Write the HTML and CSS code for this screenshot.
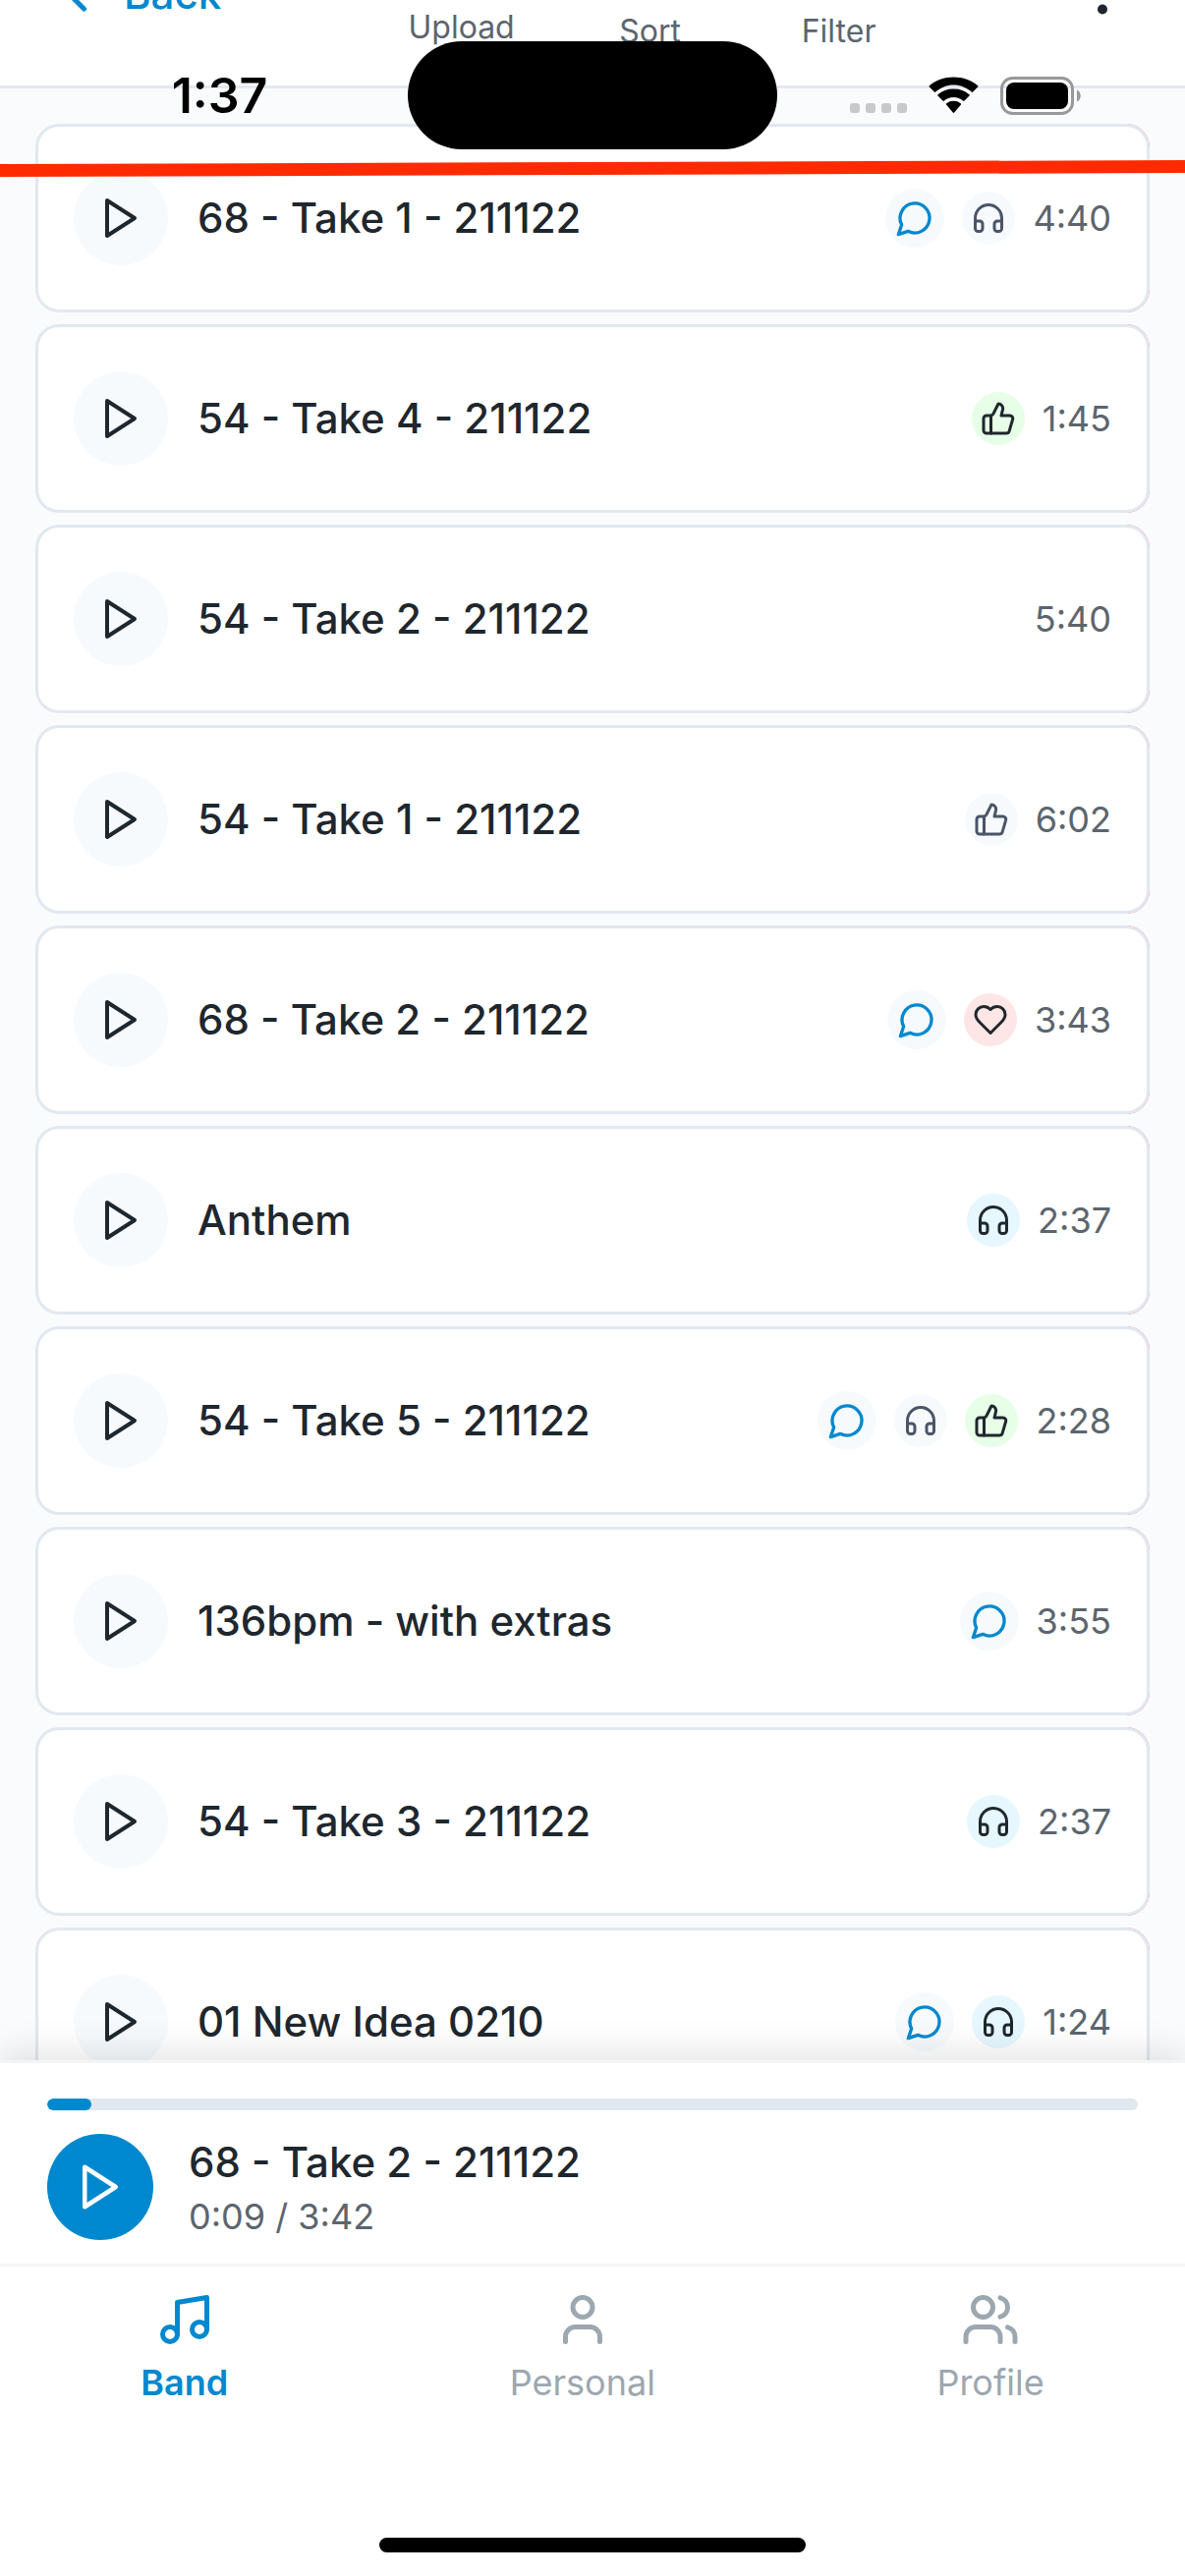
FILE: index.html
```html
<!DOCTYPE html>
<html lang="en">
<head>
<meta charset="utf-8">
<meta name="viewport" content="width=device-width, initial-scale=1">
<title>Band recordings</title>
<link rel="stylesheet" href="styles.css">
</head>
<body>
<svg class="sprite" aria-hidden="true">
  <symbol id="play" viewBox="0 0 24 24"><path d="M5 3l14 9-14 9V3z"/></symbol>
  <symbol id="comment" viewBox="0 0 24 24"><path d="M7.9 20A9 9 0 1 0 4 16.1L2 22Z"/></symbol>
  <symbol id="headphones" viewBox="0 0 24 24"><path d="M3 14h3a2 2 0 0 1 2 2v3a2 2 0 0 1-2 2H5a2 2 0 0 1-2-2v-7a9 9 0 0 1 18 0v7a2 2 0 0 1-2 2h-1a2 2 0 0 1-2-2v-3a2 2 0 0 1 2-2h3"/></symbol>
  <symbol id="thumb" viewBox="0 0 24 24"><path d="M7 10v12"/><path d="M15 5.88 14 10h5.83a2 2 0 0 1 1.92 2.56l-2.33 8A2 2 0 0 1 17.5 22H4a2 2 0 0 1-2-2v-8a2 2 0 0 1 2-2h2.76a2 2 0 0 0 1.79-1.11L12 2a3.13 3.13 0 0 1 3 3.88Z"/></symbol>
  <symbol id="heart" viewBox="0 0 24 24"><path d="M19 14c1.49-1.46 3-3.21 3-5.5A5.5 5.5 0 0 0 16.5 3c-1.76 0-3 .5-4.5 2-1.5-1.5-2.74-2-4.5-2A5.5 5.5 0 0 0 2 8.5c0 2.3 1.5 4.05 3 5.5l7 7Z"/></symbol>
</svg>

<div class="app">
  <header class="topbar">
    <a class="back" href="#"><svg class="icon icon-60" viewBox="0 0 24 24"><path d="M15 18l-6-6 6-6"/></svg>Back</a>
    <div class="tools">
      <button class="tool" type="button"><svg class="icon icon-60" viewBox="0 0 24 24"><path d="M21 15v4a2 2 0 0 1-2 2H5a2 2 0 0 1-2-2v-4M17 8l-5-5-5 5M12 3v12"/></svg>Upload</button>
      <button class="tool" type="button"><svg class="icon icon-68" viewBox="0 0 24 24"><path d="M3 6h18M6 12h12M10 18h4"/></svg>Sort</button>
      <button class="tool" type="button"><svg class="icon icon-68" viewBox="0 0 24 24"><path d="M22 3H2l8 9.46V19l4 2v-8.54L22 3z"/></svg>Filter</button>
    </div>
    <button class="more" type="button" aria-label="More"><svg class="icon icon-60" viewBox="0 0 24 24"><circle cx="12" cy="5" r="1"/><circle cx="12" cy="12" r="1"/><circle cx="12" cy="19" r="1"/></svg></button>
  </header>

  <main class="tracks">
    <ul class="list">
      <li class="swipe"><article class="card">
        <button class="play" type="button" aria-label="Play"><svg class="icon icon-48"><use href="#play"/></svg></button>
        <h2 class="title">68 - Take 1 - 211122</h2>
        <span class="badge comment"><svg class="icon icon-40"><use href="#comment"/></svg></span>
        <span class="badge"><svg class="icon icon-36"><use href="#headphones"/></svg></span>
        <time class="length">4:40</time>
      </article></li>
      <li class="swipe"><article class="card">
        <button class="play" type="button" aria-label="Play"><svg class="icon icon-48"><use href="#play"/></svg></button>
        <h2 class="title">54 - Take 4 - 211122</h2>
        <span class="badge liked"><svg class="icon icon-36"><use href="#thumb"/></svg></span>
        <time class="length">1:45</time>
      </article></li>
      <li class="swipe"><article class="card">
        <button class="play" type="button" aria-label="Play"><svg class="icon icon-48"><use href="#play"/></svg></button>
        <h2 class="title">54 - Take 2 - 211122</h2>
        <time class="length">5:40</time>
      </article></li>
      <li class="swipe"><article class="card">
        <button class="play" type="button" aria-label="Play"><svg class="icon icon-48"><use href="#play"/></svg></button>
        <h2 class="title">54 - Take 1 - 211122</h2>
        <span class="badge"><svg class="icon icon-36"><use href="#thumb"/></svg></span>
        <time class="length">6:02</time>
      </article></li>
      <li class="swipe"><article class="card">
        <button class="play" type="button" aria-label="Play"><svg class="icon icon-48"><use href="#play"/></svg></button>
        <h2 class="title">68 - Take 2 - 211122</h2>
        <span class="badge comment"><svg class="icon icon-40"><use href="#comment"/></svg></span>
        <span class="badge loved"><svg class="icon icon-36"><use href="#heart"/></svg></span>
        <time class="length">3:43</time>
      </article></li>
      <li class="swipe"><article class="card">
        <button class="play" type="button" aria-label="Play"><svg class="icon icon-48"><use href="#play"/></svg></button>
        <h2 class="title">Anthem</h2>
        <span class="badge heard"><svg class="icon icon-36"><use href="#headphones"/></svg></span>
        <time class="length">2:37</time>
      </article></li>
      <li class="swipe"><article class="card">
        <button class="play" type="button" aria-label="Play"><svg class="icon icon-48"><use href="#play"/></svg></button>
        <h2 class="title">54 - Take 5 - 211122</h2>
        <span class="badge comment"><svg class="icon icon-40"><use href="#comment"/></svg></span>
        <span class="badge"><svg class="icon icon-36"><use href="#headphones"/></svg></span>
        <span class="badge liked"><svg class="icon icon-36"><use href="#thumb"/></svg></span>
        <time class="length">2:28</time>
      </article></li>
      <li class="swipe"><article class="card">
        <button class="play" type="button" aria-label="Play"><svg class="icon icon-48"><use href="#play"/></svg></button>
        <h2 class="title">136bpm - with extras</h2>
        <span class="badge comment"><svg class="icon icon-40"><use href="#comment"/></svg></span>
        <time class="length">3:55</time>
      </article></li>
      <li class="swipe"><article class="card">
        <button class="play" type="button" aria-label="Play"><svg class="icon icon-48"><use href="#play"/></svg></button>
        <h2 class="title">54 - Take 3 - 211122</h2>
        <span class="badge heard"><svg class="icon icon-36"><use href="#headphones"/></svg></span>
        <time class="length">2:37</time>
      </article></li>
      <li class="swipe"><article class="card">
        <button class="play" type="button" aria-label="Play"><svg class="icon icon-48"><use href="#play"/></svg></button>
        <h2 class="title">01 New Idea 0210</h2>
        <span class="badge comment"><svg class="icon icon-40"><use href="#comment"/></svg></span>
        <span class="badge heard"><svg class="icon icon-36"><use href="#headphones"/></svg></span>
        <time class="length">1:24</time>
      </article></li>
    </ul>
  </main>

  <section class="player" aria-label="Now playing">
    <progress class="progress" value="9" max="222" aria-label="Playback position"></progress>
    <div class="now">
      <button class="play play-main" type="button" aria-label="Play"><svg class="icon icon-54"><use href="#play"/></svg></button>
      <div>
        <h2 class="title">68 - Take 2 - 211122</h2>
        <p class="elapsed">0:09 / 3:42</p>
      </div>
    </div>
  </section>

  <nav class="tabs">
    <a class="tab tab-active" href="#" aria-current="page"><svg class="icon icon-60" viewBox="0 0 24 24"><path d="M9 18V5l12-2v13"/><circle cx="6" cy="18" r="3"/><circle cx="18" cy="16" r="3"/></svg>Band</a>
    <a class="tab" href="#"><svg class="icon icon-60" viewBox="0 0 24 24"><path d="M19 21v-2a4 4 0 0 0-4-4H9a4 4 0 0 0-4 4v2"/><circle cx="12" cy="7" r="4"/></svg>Personal</a>
    <a class="tab" href="#"><svg class="icon icon-60" viewBox="0 0 24 24"><path d="M16 21v-2a4 4 0 0 0-4-4H6a4 4 0 0 0-4 4v2M22 21v-2a4 4 0 0 0-3-3.87M16 3.13a4 4 0 0 1 0 7.75"/><circle cx="9" cy="7" r="4"/></svg>Profile</a>
  </nav>
  <div class="home"></div>

  <div class="status">
    <span class="clock">1:37</span>
    <span class="island"></span>
    <span class="signals">
      <svg width="58" height="38" viewBox="0 0 58 38" fill="#c8c9cb"><rect y="27" width="10" height="10" rx="3"/><rect x="16" y="27" width="10" height="10" rx="3"/><rect x="32" y="27" width="10" height="10" rx="3"/><rect x="48" y="27" width="10" height="10" rx="3"/></svg>
      <svg width="51" height="38" viewBox="0 0 51 38"><path d="M25.500 8.500c7 0 13.500 2.700 18.300 7.100.4.400 1 .4 1.400 0l5-5c.4-.4.400-1 0-1.400C43.700 3.500 35 .5 25.500.5S7.300 3.500.8 9.200c-.4.400-.4 1 0 1.400l5 5c.4.400 1 .4 1.400 0 4.800-4.400 11.300-7.100 18.300-7.100z"/><path d="M25.500 21c3.700 0 7 1.400 9.600 3.600.4.400 1 .4 1.400 0l5-5c.4-.4.400-1 0-1.400A23.500 23.500 0 0 0 25.500 12.500 23.500 23.500 0 0 0 9.500 18.200c-.4.400-.4 1 0 1.400l5 5c.4.400 1 .4 1.400 0 2.600-2.200 5.900-3.600 9.600-3.600z"/><path d="M32.800 27.300c.4.400.4 1 0 1.400l-6.600 7.800c-.4.500-1 .5-1.400 0l-6.600-7.800c-.4-.4-.4-1 0-1.400a12 12 0 0 1 14.600 0z"/></svg>
      <svg width="82" height="39" viewBox="0 0 82 39"><rect x="1.500" y="1.500" width="72" height="36" rx="11" fill="none" stroke="#999" stroke-width="3"/><rect x="6" y="6" width="63" height="27" rx="8"/><path d="M78 13.500c5 2 5 10 0 12z" fill="#999"/></svg>
    </span>
  </div>
  <svg class="marker" viewBox="0 0 1206 20" preserveAspectRatio="none" aria-hidden="true"><path d="M0 5L1206 1v13L0 18z"/></svg>
</div>
</body>
</html>
```
FILE: styles.css
```css
* {
  box-sizing: border-box;
}

body {
  margin: 0;
  font-family: Inter, "Liberation Sans", sans-serif;
  color: #1f272e;
  background: #fff;
}

button {
  padding: 0;
  border: 0;
  background: none;
  font: inherit;
  color: inherit;
}

a {
  color: inherit;
  text-decoration: none;
}

h2,
p,
ul {
  margin: 0;
  padding: 0;
}

.sprite {
  display: none;
}

.app {
  position: relative;
  display: flex;
  flex-direction: column;
  height: 100vh;
  overflow: hidden;
}

/* Icons */
.icon {
  flex: none;
  fill: none;
  stroke: currentColor;
  stroke-width: 2;
  stroke-linecap: round;
  stroke-linejoin: round;
}

.icon-36 { width: 36px; height: 36px; }
.icon-40 { width: 40px; height: 40px; }
.icon-48 { width: 48px; height: 48px; }
.icon-54 { width: 54px; height: 54px; }
.icon-60 { width: 60px; height: 60px; }
.icon-68 { width: 68px; height: 68px; }

/* Top bar, pushed up under the system status bar */
.topbar {
  flex: none;
  display: flex;
  align-items: center;
  justify-content: space-between;
  margin-top: -104px;
  padding: 36px 54px 36px 48px;
  border-bottom: 3px solid #e2e8f0;
  background: #fff;
}

.back {
  display: flex;
  align-items: center;
  gap: 18px;
  padding-top: 4px;
  font-size: 42px;
  font-weight: 500;
  color: #0088ce;
}

.tools {
  display: flex;
  align-items: center;
  padding-left: 6px;
}

.tool {
  display: flex;
  flex-direction: column;
  align-items: center;
  gap: 12px;
  width: 192px;
  font-size: 32px;
  line-height: 39px;
  color: #5c656e;
}

.more {
  display: flex;
}

/* Track list */
.tracks {
  flex: 1;
  min-height: 0;
  overflow: hidden;
  padding: 36px;
  background: #fafbfd;
}

.list {
  display: flex;
  flex-direction: column;
  gap: 12px;
  list-style: none;
}

/* Delete action lies beneath the right half of each card */
.swipe {
  border-radius: 24px;
  background: linear-gradient(to right, transparent 50%, #f56565 50%);
}

.card {
  display: flex;
  align-items: center;
  gap: 18px;
  min-height: 192px;
  padding: 36px;
  border: 3px solid #e2e8f0;
  border-radius: 24px;
  background: #fff;
}

.play {
  flex: none;
  display: flex;
  align-items: center;
  justify-content: center;
  width: 96px;
  height: 96px;
  border-radius: 50%;
  background: #f7fafd;
}

.title {
  font-size: 42px;
  line-height: 54px;
  font-weight: 500;
}

.card .title {
  flex: 1;
  padding-left: 12px;
}

.badge {
  flex: none;
  display: flex;
  align-items: center;
  justify-content: center;
  width: 54px;
  height: 54px;
  border-radius: 50%;
  color: #4a5568;
  background: #f7fafd;
}

.comment {
  width: 60px;
  height: 60px;
  color: #0088ce;
}

.liked { color: #1f272e; background: #e6ffe6; }
.loved { color: #1f272e; background: #ffe6e6; }
.heard { color: #1f272e; background: #e6f7ff; }

.length,
.elapsed {
  font-size: 36px;
  line-height: 44px;
  color: #5c656e;
}

/* Player */
.player {
  position: relative;
  flex: none;
  display: flex;
  flex-direction: column;
  gap: 24px;
  padding: 36px 48px 24px;
  border-top: 3px solid #f4f5f6;
  background: #fff;
  box-shadow: 0 -6px 36px rgba(0, 0, 0, 0.12);
}

.progress {
  display: block;
  width: 100%;
  height: 12px;
  border: 0;
  border-radius: 6px;
  overflow: hidden;
  appearance: none;
  background: #e2e8f0;
}

.progress::-webkit-progress-bar {
  background: #e2e8f0;
}

.progress::-webkit-progress-value {
  border-radius: 6px;
  background: #0088ce;
}

.now {
  display: flex;
  align-items: center;
  gap: 36px;
}

.play-main {
  width: 108px;
  height: 108px;
  color: #fff;
  background: #0088ce;
}

.elapsed {
  padding-top: 6px;
}

/* Bottom navigation */
.tabs {
  position: relative;
  flex: none;
  display: flex;
  justify-content: space-around;
  padding: 24px 0 136px;
  border-top: 3px solid #f4f5f6;
  background: #fff;
}

.tab {
  display: flex;
  flex-direction: column;
  align-items: center;
  gap: 12px;
  font-size: 36px;
  line-height: 44px;
  color: #9ca7b0;
}

.tab-active {
  font-weight: 600;
  color: #0088ce;
}

.home {
  position: relative;
  flex: none;
  align-self: center;
  width: 36%;
  height: 15px;
  margin-bottom: 24px;
  border-radius: 8px;
  background: #000;
}

/* System status bar, drawn over the page */
.status {
  position: absolute;
  top: 42px;
  left: 0;
  right: 0;
  display: grid;
  grid-template-columns: 1fr 376px 1fr;
  align-items: center;
  color: #000;
}

.clock {
  padding-left: 32px;
  text-align: center;
  font-size: 50px;
  font-weight: 600;
}

.island {
  height: 110px;
  border-radius: 55px;
  background: #000;
}

.signals {
  display: flex;
  align-items: center;
  justify-content: center;
  gap: 22px;
  padding-right: 32px;
}

.marker {
  position: absolute;
  top: 162px;
  left: 0;
  width: 100%;
  height: 20px;
  fill: #ff2a00;
}
```
